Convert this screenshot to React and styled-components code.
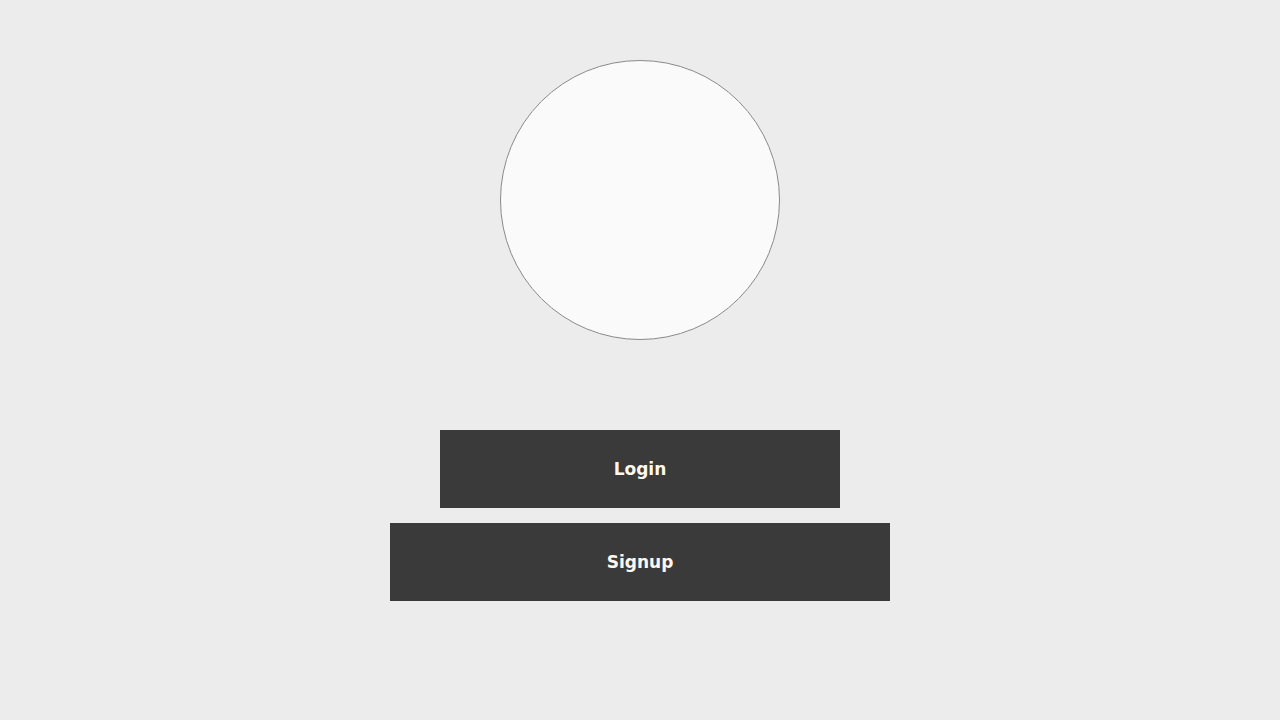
import React from "react";
import styled, { createGlobalStyle } from "styled-components";

const GlobalStyle = createGlobalStyle`
  html, body {
    margin: 0;
    padding: 0;
    background: #ececec;
  }
  body {
    font-family: "DejaVu Sans", "Open Sans", sans-serif;
  }
`;

const Page = styled.main`
  min-height: 720px;
  display: flex;
  flex-flow: column nowrap;
  align-items: center;
  padding-top: 60px;
  box-sizing: border-box;
`;

const Avatar = styled.div`
  width: 280px;
  height: 280px;
  box-sizing: border-box;
  border-radius: 50%;
  border: 1px solid #8a8a8a;
  background: #fafafa;
`;

const Actions = styled.div`
  display: flex;
  flex-flow: column nowrap;
  align-items: center;
  gap: 15px;
  margin-top: 90px;
`;

const Button = styled.button`
  width: ${({ $width }) => $width}px;
  height: 78px;
  border: none;
  background: #3a3a3a;
  color: #fdf8ef;
  font-family: "DejaVu Sans", "Open Sans", sans-serif;
  font-weight: 700;
  font-size: 17px;
  cursor: pointer;
`;

export default function App() {
  return (
    <>
      <GlobalStyle />
      <Page>
        <Avatar />
        <Actions>
          <Button $width={400}>Login</Button>
          <Button $width={500}>Signup</Button>
        </Actions>
      </Page>
    </>
  );
}
